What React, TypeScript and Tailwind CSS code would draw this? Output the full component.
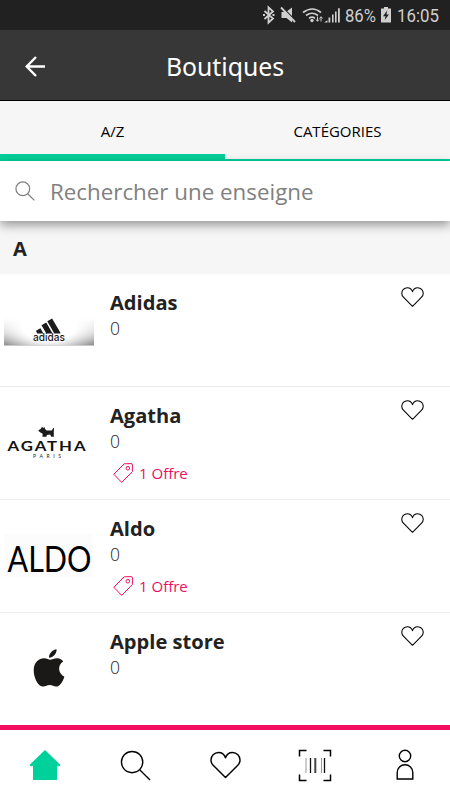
import { useState } from "react";
import type { ReactNode } from "react";

type Shop = {
  name: string;
  count: number;
  offers?: number;
  logo: ReactNode;
};

function AdidasLogo() {
  return (
    <svg width="90" height="90" viewBox="0 0 90 90">
      <defs>
        <linearGradient id="adidas-floor" x1="0" y1="0" x2="0" y2="1">
          <stop offset="0" stopColor="#fff" />
          <stop offset="0.5" stopColor="#d8d8d8" />
          <stop offset="1" stopColor="#8f8f8f" />
        </linearGradient>
        <radialGradient
          id="adidas-glow"
          gradientUnits="userSpaceOnUse"
          cx="0"
          cy="0"
          r="1"
          gradientTransform="translate(45 38) scale(54 32)"
        >
          <stop offset="0.5" stopColor="#fff" />
          <stop offset="1" stopColor="#fff" stopOpacity="0" />
        </radialGradient>
      </defs>
      <rect y="31" width="90" height="27.500" fill="url(#adidas-floor)" />
      <rect y="31" width="90" height="27.500" fill="url(#adidas-glow)" />
      <path
        d="M32 43.800l4.400-2.500 3 5.200h-6.200zM37.500 38.200l4.700-2.700L48.600 46.500H42.300zM43.300 34.300l4.800-2.800L56.300 45.600v.9h-6z"
        fill="#1b1b1b"
      />
      <text
        x="29"
        y="54.300"
        textLength="32"
        lengthAdjust="spacingAndGlyphs"
        fontSize="10.500"
        fontWeight="500"
        fill="#1b1b1b"
        className="font-['Inter',sans-serif]"
      >
        adidas
      </text>
    </svg>
  );
}

function AgathaLogo() {
  return (
    <svg width="90" height="90" viewBox="0 0 90 90">
      <path
        d="M34.200 30.500l2.900-2 .8-1.800 1.300 1.200 1.200-.9.700 2.100 1.500 1.300h5.200l1.400-2.500.9.400-.3 2.700v5.800h-2.500l-1.200-2.200-3.200.3-.5 1.900h-4l.3-3-2.700-1.500z"
        fill="#1b1b1b"
      />
      <text
        x="3.500"
        y="50.500"
        textLength="80"
        lengthAdjust="spacingAndGlyphs"
        fontSize="13"
        fontWeight="700"
        fill="#111"
        className="font-['Lato',sans-serif] tracking-[1.500px]"
      >
        AGATHA
      </text>
      <text
        x="29"
        y="57.700"
        textLength="28"
        fontSize="5"
        fill="#222"
        className="font-['Lato',sans-serif]"
      >
        PARIS
      </text>
    </svg>
  );
}

function AldoLogo() {
  return (
    <svg className="overflow-visible" width="90" height="90" viewBox="0 0 90 90">
      <rect y="21" width="89" height="43" fill="#fcfcfc" />
      <text
        x="3.500"
        y="58.500"
        textLength="84"
        lengthAdjust="spacingAndGlyphs"
        fontSize="37"
        fill="#000"
        className="font-['Lato',sans-serif]"
      >
        ALDO
      </text>
    </svg>
  );
}

function AppleLogo() {
  return (
    <svg width="90" height="90" viewBox="0 0 90 90">
      <path
        d="M52.600 23.200c.3 4-3.300 8.400-7.500 8.600-.5-4 3.400-8.200 7.500-8.600zM59.200 35.500c-6 3.500-5.200 12.200 1.200 15.200-1.500 4.600-4.700 10-8.400 9.900-2.300-.1-3.500-1.500-6.300-1.500s-4.100 1.400-6.300 1.500c-5.400.1-9.700-9.200-9.700-16.200 0-8.400 5.600-12.300 10.400-12.200 2.600.1 4.600 1.600 6.200 1.600 1.500 0 4-1.700 7.200-1.500 2.200.1 4.300 1.200 5.700 3.200z"
        fill="#1b1818"
      />
    </svg>
  );
}

const shops: Shop[] = [
  { name: "Adidas", count: 0, logo: <AdidasLogo /> },
  { name: "Agatha", count: 0, offers: 1, logo: <AgathaLogo /> },
  { name: "Aldo", count: 0, offers: 1, logo: <AldoLogo /> },
  { name: "Apple store", count: 0, logo: <AppleLogo /> },
];

function HeartIcon({ className }: { className: string }) {
  return (
    <svg
      className={className}
      viewBox="0 0 32 28"
      fill="none"
      stroke="currentColor"
      strokeWidth="1.500"
      strokeLinejoin="round"
    >
      <path d="M16 27L3.300 14.300A7.600 7.600 0 0 1 1 9a7.800 7.800 0 0 1 7.800-8C12 1 14.800 2.800 16 6.500 17.200 2.800 20 1 23.200 1A7.800 7.800 0 0 1 31 9a7.600 7.600 0 0 1-2.300 5.300z" />
    </svg>
  );
}

function SearchIcon({ className }: { className: string }) {
  return (
    <svg
      className={className}
      viewBox="0 0 32 32"
      fill="none"
      stroke="currentColor"
    >
      <circle cx="12.500" cy="12.500" r="11" />
      <path d="M20.300 20.300L31 31" />
    </svg>
  );
}

function TagIcon() {
  return (
    <svg
      className="h-5 w-5"
      viewBox="0 0 20 20"
      fill="none"
      stroke="currentColor"
      strokeLinejoin="round"
    >
      <path d="M.8 11.200L11.200.8l6.800-.2q1.400 0 1.400 1.400v6.500L8.700 19.400z" />
      <circle cx="14.800" cy="5.200" r="1.800" />
    </svg>
  );
}

function StatusBar() {
  return (
    <div className="flex h-[30px] shrink-0 items-center justify-end bg-[#212121] pr-[11px] text-[#cfcfcf]">
      <svg width="83" height="20" viewBox="0 0 83 20" fill="none">
        <path
          d="M2.500 6l8.500 7.500-4.500 4.200V2.300L11 6.500 2.500 14"
          stroke="currentColor"
          strokeWidth="1.800"
        />
        <path d="M1 8.900h2v2H1zM10.500 8.900h2v2h-2z" fill="currentColor" />
        <path
          d="M19.500 7h4.500l6-4.500v15L24.500 13h-5z"
          fill="currentColor"
        />
        <path d="M20.500 2.500L34.500 16.500" stroke="#212121" strokeWidth="1.500" />
        <path d="M19 2.500L33 17" stroke="currentColor" strokeWidth="1.800" />
        <path
          d="M41 7.500q9.500-7 18 0M44 10.500q6-4.500 12 0M47 13.300q3-2.300 6 0"
          stroke="currentColor"
          strokeWidth="1.700"
        />
        <circle cx="50" cy="15.500" r="1.700" fill="currentColor" />
        <path
          d="M55.500 11.500V16M54 14.500l1.500 1.800 1.500-1.800M59 16.500V12M57.500 13.500l1.500-1.800 1.500 1.800"
          stroke="currentColor"
        />
        <path
          d="M62 17.500l3.500-2.200V17.500zM66.500 12.500h1.800v5h-1.800zM70 9.500h1.600v8H70zM73 6.500h1.600v11H73zM76 3.200h1.800V17.500H76z"
          fill="currentColor"
        />
      </svg>
      <span className="mr-[4px] w-[31px] font-['Roboto',sans-serif] text-[18.500px] leading-none whitespace-nowrap">
        <span className="inline-block origin-left translate-y-px scale-x-[0.900]">
          86%
        </span>
      </span>
      <svg width="12" height="18" viewBox="0 0 12 18" fill="currentColor">
        <path d="M4 1h4v1.500h3v14H1v-14h3z" />
        <path d="M7.200 4.500L3 10.300h2.500L4.700 14 9 8.500H6.500z" fill="#212121" />
      </svg>
      <span className="ml-[5px] w-[42px] font-['Roboto',sans-serif] text-[18.500px] leading-none">
        <span className="inline-block origin-left translate-y-px scale-x-[0.910]">
          16:05
        </span>
      </span>
    </div>
  );
}

function Header() {
  return (
    <header className="relative flex h-[70px] shrink-0 items-center justify-center bg-[#373737] text-white">
      <button className="absolute top-[26px] left-[25px]" aria-label="Retour">
        <svg
          width="21"
          height="21"
          viewBox="0 0 21 21"
          fill="none"
          stroke="currentColor"
          strokeWidth="2.400"
        >
          <path d="M20 10.500H2M11 1L1.700 10.500 11 20" />
        </svg>
      </button>
      <h1 className="pt-px font-['Noto_Sans',sans-serif] text-[24.800px] leading-[34px]">
        Boutiques
      </h1>
    </header>
  );
}

function ShopRow({ shop }: { shop: Shop }) {
  return (
    <li className="flex h-[113px] items-start border-b border-[#ececec] pl-1">
      <div className="mt-[13px] h-[90px] w-[90px]">{shop.logo}</div>
      <div className="ml-4 flex-1 pt-[15px]">
        <h2 className="text-[20.100px] leading-[27px] font-bold text-[#222]">
          {shop.name}
        </h2>
        <p className="text-[17.500px] leading-6 font-light text-[#222]">
          {shop.count}
        </p>
        {shop.offers && (
          <p className="mt-[10px] ml-[3px] flex items-center gap-[6px] text-[15px] leading-5 text-[#ec0f5c]">
            <TagIcon />
            {shop.offers} Offre
          </p>
        )}
      </div>
      <button className="mt-[13px] mr-[26px]" aria-label="Favori">
        <HeartIcon className="h-5 w-[23px] text-black" />
      </button>
    </li>
  );
}

function BottomNav() {
  return (
    <nav className="grid h-[75px] shrink-0 grid-cols-5 place-items-center border-t-[5px] border-[#f20d5e] bg-white text-black">
      <svg width="32" height="32" viewBox="0 0 32 32" fill="#00d09a">
        <path d="M16 1l15.500 15-1.500 1.500-2-1V31H4V16.500l-2 1L.5 16z" />
      </svg>
      <SearchIcon className="h-[31px] w-[31px] stroke-[1.400]" />
      <HeartIcon className="h-[28px] w-[31px]" />
      <svg width="34" height="33" viewBox="0 0 34 33" fill="none">
        <path
          d="M1.500 7.500v-6h7M25.500 1.500h7v6M32.500 25.500v6h-7M8.500 31.500h-7v-6"
          stroke="currentColor"
          strokeWidth="1.500"
        />
        <path d="M8 9v15M23.500 9v15" stroke="#999" />
        <path d="M12.500 9v15M26.500 9v15" stroke="#111" strokeWidth="1.300" />
        <path d="M17.300 9v15" stroke="#444" strokeWidth="2" />
      </svg>
      <svg
        width="18"
        height="32"
        viewBox="0 0 18 32"
        fill="none"
        stroke="currentColor"
        strokeWidth="1.400"
      >
        <circle cx="9" cy="7" r="5.700" />
        <path d="M1.200 30V23.500a7.800 7.800 0 0 1 15.600 0V30z" />
      </svg>
    </nav>
  );
}

export default function App() {
  const [tab, setTab] = useState("az");

  return (
    <div className="flex h-[800px] w-[450px] flex-col overflow-hidden bg-white font-['Open_Sans',sans-serif]">
      <StatusBar />
      <Header />
      <div className="grid h-[61px] shrink-0 grid-cols-2 border-t border-black bg-[#f6f6f6] text-[15px] text-black">
        <button
          onClick={() => setTab("az")}
          className={
            tab === "az"
              ? "border-b-[7px] border-[#00cf99] pt-[7px]"
              : "border-b-2 border-[#00cf99] pt-[2px]"
          }
        >
          A/Z
        </button>
        <button
          onClick={() => setTab("categories")}
          className={
            tab === "categories"
              ? "border-b-[7px] border-[#00cf99] pt-[7px]"
              : "border-b-2 border-[#00cf99] pt-[2px]"
          }
        >
          CATÉGORIES
        </button>
      </div>
      <div className="z-10 flex h-[60px] shrink-0 items-center bg-white pl-[15px] text-[#808080] shadow-[0_4px_10px_rgba(0,0,0,0.400)]">
        <SearchIcon className="h-[20px] w-[20px] stroke-2" />
        <span className="ml-[15px] pt-px text-[22.350px] leading-8">
          Rechercher une enseigne
        </span>
      </div>
      <h3 className="h-[53px] shrink-0 bg-[#f6f6f6] pt-[14px] pl-[13px] text-[20px] leading-[27px] font-bold text-[#222]">
        A
      </h3>
      <ul className="min-h-0 flex-1 overflow-hidden">
        {shops.map((shop) => (
          <ShopRow key={shop.name} shop={shop} />
        ))}
      </ul>
      <BottomNav />
    </div>
  );
}
